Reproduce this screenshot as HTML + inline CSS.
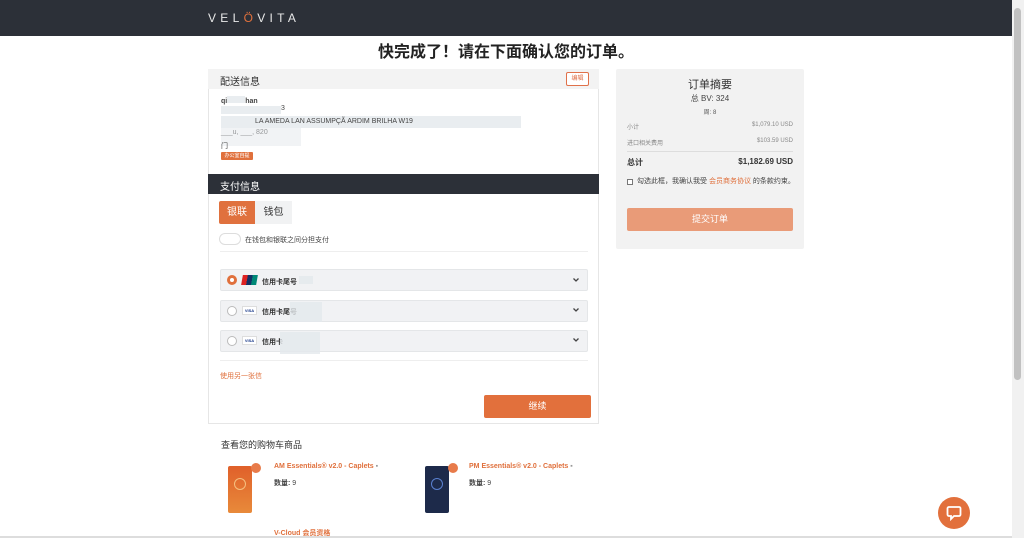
<!DOCTYPE html>
<html><head><meta charset="utf-8"><style>
*{box-sizing:border-box;margin:0;padding:0}
body{width:1024px;height:538px;overflow:hidden;background:#fff;font-family:"Liberation Sans","Noto Sans CJK SC",sans-serif;color:#333;position:relative}
.abs{position:absolute}
.hdr{left:0;top:0;width:1012px;height:36px;background:#2c3038}
.logo{left:208px;top:11px;color:#e8e8e8;font-size:12px;letter-spacing:4.3px}
.sb{left:1012px;top:0;width:12px;height:538px;background:#f1f1f1}
.thumb{left:1014px;top:8px;width:7px;height:372px;background:#c1c1c1;border-radius:4px}
h1{position:absolute;left:0;width:1012px;top:38px;text-align:center;font-size:16px;font-weight:bold;color:#222}
.panel{left:208px;top:69px;width:391px;height:355px;border:1px solid #e6e6e6}
.ph{left:208px;top:69px;width:391px;height:20px;background:#f3f3f3;font-size:10px;padding:4px 12px}
.edit{left:566px;top:72px;width:23px;height:14px;border:1px solid #e0714a;color:#e0714a;font-size:6px;text-align:center;line-height:12px;border-radius:2px;background:#fff}
.dark{left:208px;top:174px;width:391px;height:20px;background:#2c3038;color:#fff;font-size:10px;padding:4px 12px}
.t{font-size:7px;color:#444}
.blur{background:#e4e8ec;opacity:.8}
.tab1{left:219px;top:201px;width:36px;height:23px;background:#e0713e;color:#fff;font-size:10px;text-align:center;line-height:23px;border-radius:2px 0 0 2px}
.tab2{left:255px;top:201px;width:37px;height:23px;background:#f1f2f3;font-size:10px;text-align:center;line-height:23px}
.card{left:220px;width:368px;height:22px;background:#f1f2f4;border:1px solid #e4e6e8;border-radius:2px}
.rad{left:227px;width:10px;height:10px;border:1px solid #bbb;border-radius:50%;background:#fff}
.ct{left:262px;font-size:7px;font-weight:bold;color:#333}
.chev{left:572px;width:8px;height:8px}
.btn{left:484px;top:395px;width:107px;height:23px;background:#e2703c;color:#fff;font-size:9px;text-align:center;line-height:23px;border-radius:2px}
.rp{left:616px;top:69px;width:188px;height:180px;background:#f2f2f2;border-radius:2px}
.orange{color:#e0703c}
.chat{left:938px;top:497px;width:32px;height:32px;border-radius:50%;background:#e2703c}
</style></head><body>
<div class="abs hdr"></div>
<div class="abs logo">VEL<span style="color:#e0703c">Ö</span>VITA</div>
<div class="abs sb"></div><div class="abs thumb"></div>
<h1>快完成了！请在下面确认您的订单。</h1>

<div class="abs panel"></div>
<div class="abs ph">配送信息</div>
<div class="abs edit">编辑</div>
<div class="abs t" style="left:221px;top:96px;font-weight:bold">qi<span class="blur" style="display:inline-block;width:18px;height:7px"></span>han</div>
<div class="abs blur" style="left:221px;top:106px;width:60px;height:8px"></div>
<div class="abs t" style="left:281px;top:105px">3</div>
<div class="abs blur" style="left:221px;top:116px;width:300px;height:12px"></div>
<div class="abs t" style="left:255px;top:118px">LA AMEDA LAN ASSUMPÇÃ ARDIM BRILHA W19</div>
<div class="abs t" style="left:221px;top:129px">___u, ___, 820</div>
<div class="abs blur" style="left:221px;top:128px;width:80px;height:18px;opacity:.5"></div>
<div class="abs t" style="left:221px;top:141px">门</div>
<div class="abs" style="left:221px;top:152px;width:32px;height:8px;background:#e0703c;color:#fff;font-size:5px;text-align:center;line-height:8px;border-radius:1px">办公室自提</div>

<div class="abs dark">支付信息</div>
<div class="abs tab1">银联</div><div class="abs tab2">钱包</div>
<div class="abs" style="left:219px;top:233px;width:22px;height:12px;border:1px solid #ddd;border-radius:6px;background:#fff"></div>
<div class="abs t" style="left:245px;top:235px;font-size:7px">在钱包和银联之间分担支付</div>
<div class="abs" style="left:220px;top:251px;width:368px;height:1px;background:#eee"></div>

<div class="abs card" style="top:269px"></div>
<div class="abs rad" style="top:275px;border:3px solid #e0703c"></div>
<div class="abs" style="left:242px;top:275px;width:15px;height:10px;background:linear-gradient(90deg,#d22 33%,#136 33% 66%,#087 66%);transform:skewX(-10deg)"></div>
<div class="abs ct" style="top:276px">信用卡尾号 <span class="blur" style="display:inline-block;width:14px;height:8px"></span></div>
<svg class="abs chev" style="top:276px" viewBox="0 0 8 8"><path d="M1.5 2.5L4 5l2.5-2.5" fill="none" stroke="#444" stroke-width="1.3"/></svg>

<div class="abs card" style="top:300px"></div>
<div class="abs rad" style="top:306px"></div>
<div class="abs" style="left:242px;top:306px;width:15px;height:9px;background:#fff;border:1px solid #ddd;font-size:4px;color:#1a3a8a;font-weight:bold;text-align:center;line-height:8px">VISA</div>
<div class="abs ct" style="top:307px">信用卡尾号</div>
<div class="abs blur" style="left:290px;top:302px;width:32px;height:20px"></div>
<svg class="abs chev" style="top:306px" viewBox="0 0 8 8"><path d="M1.5 2.5L4 5l2.5-2.5" fill="none" stroke="#444" stroke-width="1.3"/></svg>

<div class="abs card" style="top:330px"></div>
<div class="abs rad" style="top:336px"></div>
<div class="abs" style="left:242px;top:336px;width:15px;height:9px;background:#fff;border:1px solid #ddd;font-size:4px;color:#1a3a8a;font-weight:bold;text-align:center;line-height:8px">VISA</div>
<div class="abs ct" style="top:337px">信用卡</div>
<div class="abs blur" style="left:280px;top:332px;width:40px;height:22px"></div>
<svg class="abs chev" style="top:336px" viewBox="0 0 8 8"><path d="M1.5 2.5L4 5l2.5-2.5" fill="none" stroke="#444" stroke-width="1.3"/></svg>
<div class="abs" style="left:220px;top:360px;width:368px;height:1px;background:#eee"></div>
<div class="abs orange" style="left:220px;top:371px;font-size:7px">使用另一张信</div>
<div class="abs btn">继续</div>

<div class="abs" style="left:221px;top:438px;font-size:9px;color:#333">查看您的购物车商品</div>
<div class="abs" style="left:228px;top:466px;width:24px;height:47px;background:linear-gradient(#e0602a,#e88a3a);border-radius:2px"></div>
<div class="abs" style="left:234px;top:478px;width:12px;height:12px;border-radius:50%;border:1px solid #f5c080"></div>
<div class="abs" style="left:251px;top:463px;width:10px;height:10px;border-radius:50%;background:#e87b4a"></div>
<div class="abs orange" style="left:274px;top:463px;font-size:7px;font-weight:bold">AM Essentials® v2.0 - Caplets <span style="color:#999">▪</span></div>
<div class="abs t" style="left:274px;top:478px"><b>数量:</b> 9</div>
<div class="abs" style="left:425px;top:466px;width:24px;height:47px;background:#1d2a4a;border-radius:2px"></div>
<div class="abs" style="left:431px;top:478px;width:12px;height:12px;border-radius:50%;border:1px solid #5a80d0"></div>
<div class="abs" style="left:448px;top:463px;width:10px;height:10px;border-radius:50%;background:#e87b4a"></div>
<div class="abs orange" style="left:469px;top:463px;font-size:7px;font-weight:bold">PM Essentials® v2.0 - Caplets <span style="color:#999">▪</span></div>
<div class="abs t" style="left:469px;top:478px"><b>数量:</b> 9</div>
<div class="abs orange" style="left:274px;top:528px;font-size:7px;font-weight:bold">V-Cloud 会员资格</div>
<div class="abs" style="left:0;top:536px;width:1012px;height:2px;background:#ddd"></div>

<div class="abs rp"></div>
<div class="abs" style="left:616px;top:76px;width:188px;text-align:center;font-size:11px;color:#333">订单摘要</div>
<div class="abs" style="left:616px;top:93px;width:188px;text-align:center;font-size:8px;color:#444">总 BV: 324</div>
<div class="abs" style="left:616px;top:107px;width:188px;text-align:center;font-size:6px;color:#555">周: 8</div>
<div class="abs" style="left:627px;top:122px;font-size:6px;color:#888">小计</div>
<div class="abs" style="left:700px;width:93px;text-align:right;top:122px;font-size:6px;color:#888">$1,079.10 USD</div>
<div class="abs" style="left:627px;top:138px;font-size:6px;color:#888">进口相关费用</div>
<div class="abs" style="left:700px;width:93px;text-align:right;top:138px;font-size:6px;color:#888">$103.59 USD</div>
<div class="abs" style="left:627px;top:151px;width:166px;height:1px;background:#ddd"></div>
<div class="abs" style="left:627px;top:157px;font-size:8px;font-weight:bold;color:#333">总计</div>
<div class="abs" style="left:680px;width:113px;text-align:right;top:157px;font-size:8px;font-weight:bold;color:#333">$1,182.69 USD</div>
<div class="abs" style="left:627px;top:179px;width:6px;height:6px;border:1px solid #777;background:#fff"></div>
<div class="abs" style="left:637px;top:176px;width:158px;font-size:7px;color:#444;line-height:11px">勾选此框，我确认我受 <span class="orange">会员商务协议</span> 的条款约束。</div>
<div class="abs" style="left:627px;top:208px;width:166px;height:23px;background:#e99b78;color:#fff;font-size:9px;text-align:center;line-height:23px;border-radius:2px">提交订单</div>

<div class="abs chat"></div>
<svg class="abs" style="left:946px;top:505px" width="16" height="16" viewBox="0 0 16 16"><path d="M3 2h10a1.5 1.5 0 0 1 1.5 1.5v6A1.5 1.5 0 0 1 13 11H8l-3 3v-3H3a1.5 1.5 0 0 1-1.5-1.5v-6A1.5 1.5 0 0 1 3 2z" fill="none" stroke="#fff" stroke-width="1.8"/></svg>
</body></html>
